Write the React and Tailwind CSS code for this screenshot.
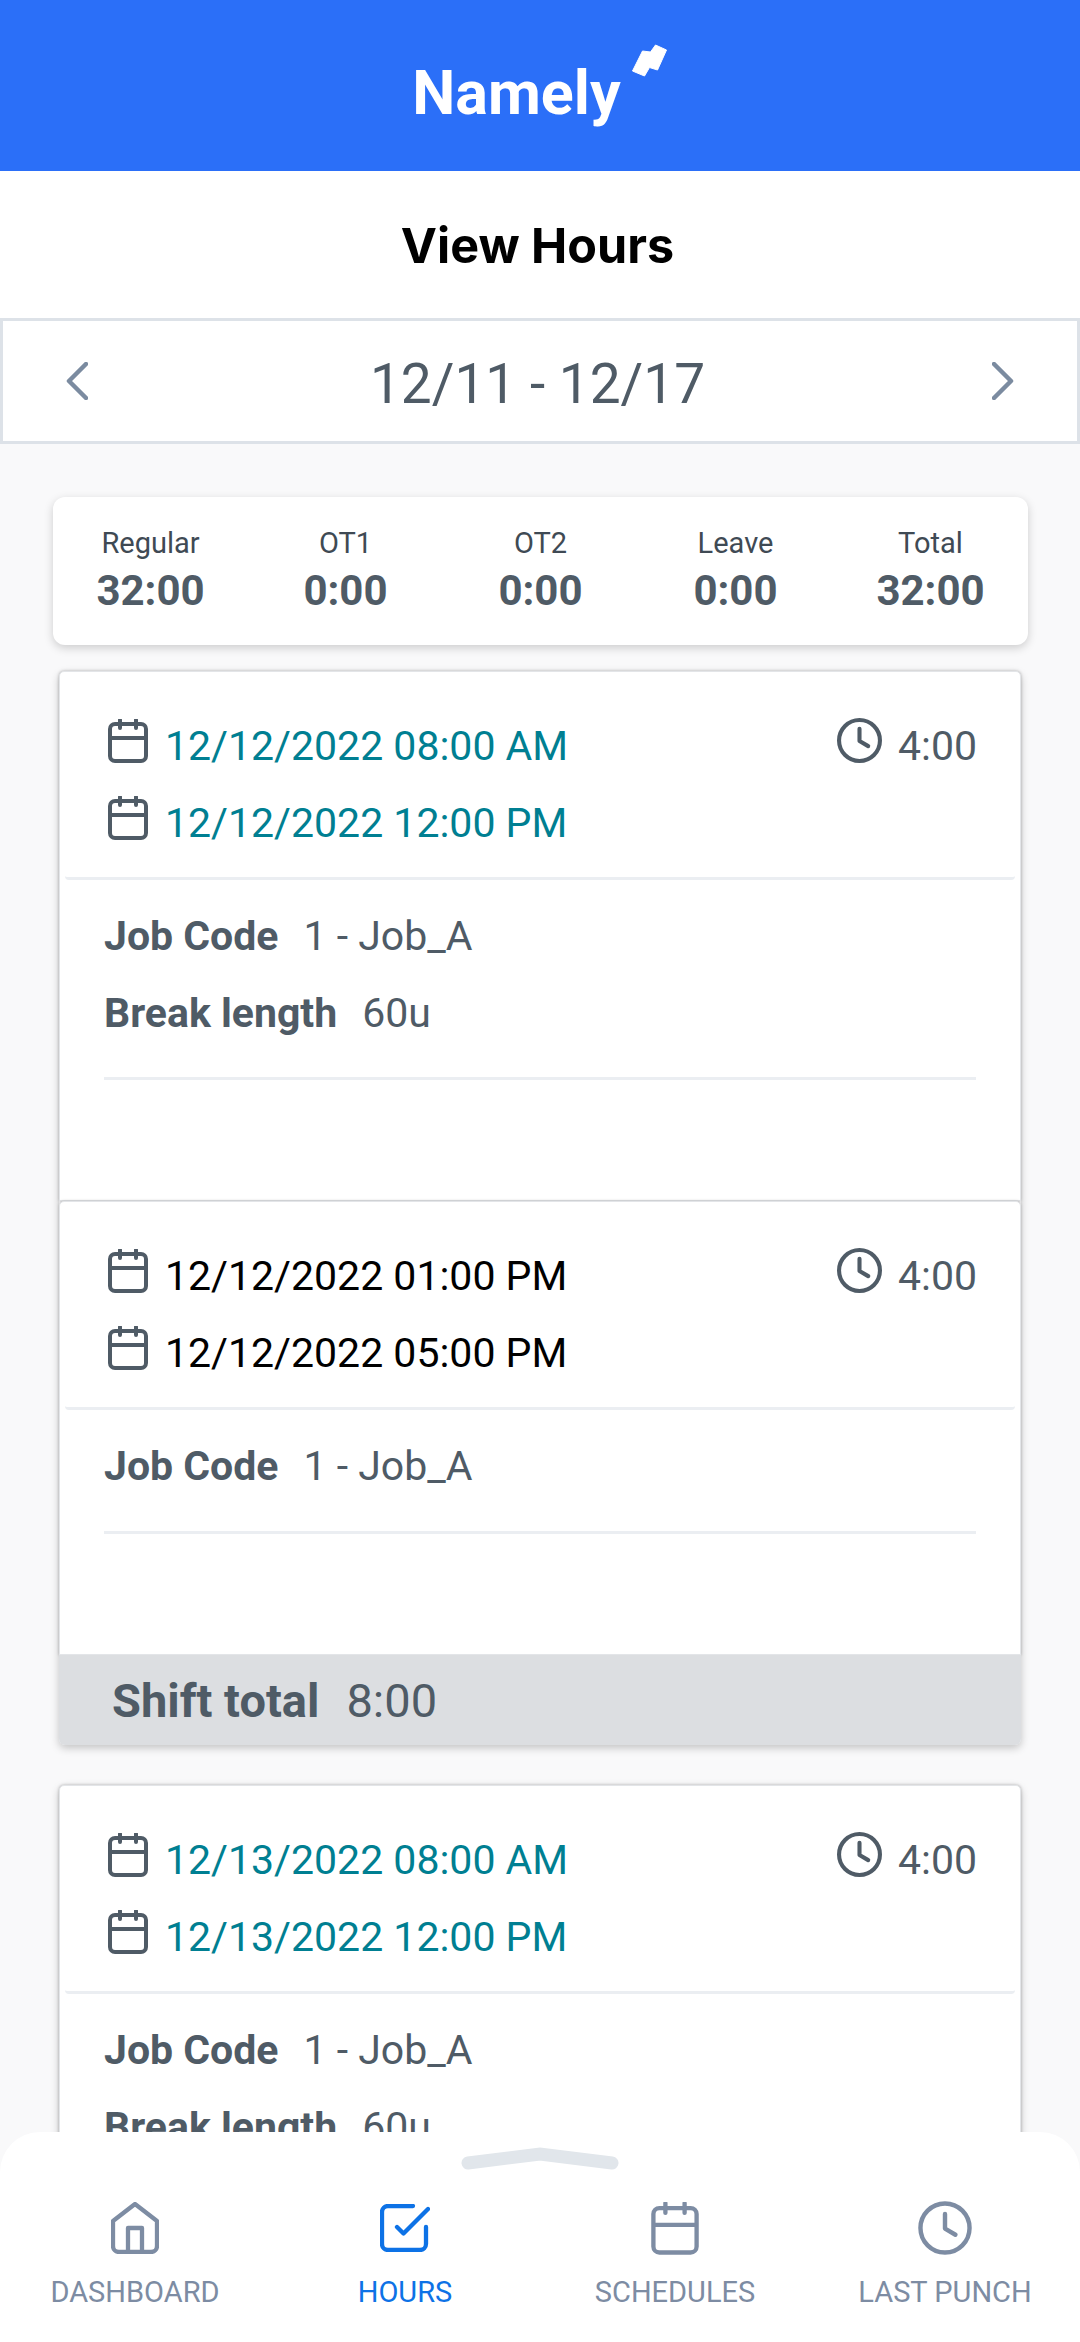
import React from "react";

const Calendar = ({ className, sw = 4 }) => (
  <svg viewBox="0 0 40 44" fill="none" stroke="currentColor" strokeWidth={sw} className={className}>
    <rect x="2" y="5" width="36" height="37" rx="5" />
    <path d="M2 19h36" />
    <path d="M12 1v8M28 1v8" strokeLinecap="round" />
  </svg>
);

const Clock = ({ className, sw = 4 }) => (
  <svg viewBox="0 0 44 44" fill="none" stroke="currentColor" strokeWidth={sw} strokeLinecap="round" strokeLinejoin="round" className={className}>
    <circle cx="22" cy="22" r="20" />
    <path d="M22 10.5v12l8.5 5" />
  </svg>
);

const Home = ({ className }) => (
  <svg viewBox="0 0 48 52" fill="none" stroke="currentColor" strokeWidth="4.3" strokeLinejoin="round" className={className}>
    <path d="M24 2 2 19v25a6 6 0 0 0 6 6h32a6 6 0 0 0 6-6V19Z" />
    <path d="M17 50V26h14v24" />
  </svg>
);

const CheckSquare = ({ className }) => (
  <svg viewBox="0 0 50 48" fill="none" stroke="currentColor" strokeWidth="4.3" strokeLinecap="round" strokeLinejoin="round" className={className}>
    <path d="M33 2H8a6 6 0 0 0-6 6v32a6 6 0 0 0 6 6h32a6 6 0 0 0 6-6V23" />
    <path d="m17 23 6.5 6.5L48 5" />
  </svg>
);

const Summary = ({ label, value }) => (
  <div className="flex flex-col items-center -mt-[1px]">
    <span className="text-[29px] leading-[36px] text-[#3f4a54]">{label}</span>
    <span className="text-[42px] leading-[50px] mt-[5px] font-bold text-[#4f5b66]">{value}</span>
  </div>
);

const DateRow = ({ text, color }) => (
  <div className="flex items-center h-[77px] gap-[17px]">
    <Calendar className="w-[40px] h-[44px] text-[#4f5b66] shrink-0 -mt-[11px]" />
    <span className={"text-[41px] " + color}>{text}</span>
  </div>
);

const Shift = ({ from, to, color, children }) => (
  <div className="bg-white border border-[#e3e5e8] rounded-t-[5px] shadow-[0_0_3px_rgba(0,0,0,0.25)] flex flex-col">
    <div className="pt-[36px] h-[208px] mx-[5px] border-b-[3px] border-[#ebeef2] rounded-b-[4px] pl-[43px] pr-[38px] flex justify-between">
      <div className="flex flex-col">
        <DateRow text={from} color={color} />
        <DateRow text={to} color={color} />
      </div>
      <div className="flex items-center h-[77px] gap-[16px]">
        <Clock className="w-[45px] h-[45px] text-[#4f5b66] -mt-[12px]" />
        <span className="text-[41px] text-[#4f5b66]">4:00</span>
      </div>
    </div>
    {children}
  </div>
);

const Info = ({ label, value }) => (
  <div className="flex items-center h-[77px] gap-[25px] text-[41px] text-[#4f5b66]">
    <span className="font-bold">{label}</span>
    <span>{value}</span>
  </div>
);

const NavItem = ({ icon, label, active }) => (
  <div className={"flex flex-col items-center " + (active ? "text-[#0d72e6]" : "text-[#7d8ca3]")}>
    <div className="h-[54px] flex items-center justify-center">{icon}</div>
    <span className="text-[29px] mt-[20px] leading-[34px]">{label}</span>
  </div>
);

export default function App() {
  return (
    <div className="relative h-[2342px] w-[1080px] overflow-hidden bg-[#f9f9fa] flex flex-col" style={{ fontFamily: "Roboto, sans-serif" }}>
      <header className="h-[171px] bg-[#2b6ff8] flex items-center justify-center shrink-0">
        <div className="flex items-start">
          <span className="text-white text-[61px] font-bold leading-[70px] mt-[14px]">Namely</span>
          <svg viewBox="0 0 36 33" className="ml-[10px] w-[37px] h-[33px]" fill="#fff" stroke="#fff" strokeLinejoin="round">
            <path d="M1 27 13 32 18 23.5 26 26 35 6 24 1 19 8 11 7Z" />
          </svg>
        </div>
      </header>

      <h1 className="h-[147px] bg-white flex items-center justify-center text-[48.5px] font-bold text-black shrink-0 pt-[3px] pr-[5px]" style={{ fontFamily: "Inter, sans-serif" }}>
        View Hours
      </h1>

      <div className="h-[126px] bg-white border-[3px] border-[#dde2e8] flex items-center justify-between px-[63px] shrink-0">
        <svg viewBox="0 0 22 38" className="w-[22px] h-[38px] text-[#7b8ba0]" fill="none" stroke="currentColor" strokeWidth="4.5" strokeLinecap="round" strokeLinejoin="round">
          <path d="M20 2 3 19l17 17" />
        </svg>
        <span className="text-[55px] text-[#4f5b66] pt-[7px] mr-[5px]">12/11 - 12/17</span>
        <svg viewBox="0 0 22 38" className="w-[22px] h-[38px] text-[#7b8ba0]" fill="none" stroke="currentColor" strokeWidth="4.5" strokeLinecap="round" strokeLinejoin="round">
          <path d="m2 2 17 17L2 36" />
        </svg>
      </div>

      <main className="flex-1 min-h-0 overflow-hidden pl-[53px] pr-[52px] pt-[53px]">
        <div className="h-[148px] bg-white rounded-[12px] shadow-[0_3px_10px_rgba(0,0,0,0.18)] grid grid-cols-5 items-center">
          <Summary label="Regular" value="32:00" />
          <Summary label="OT1" value="0:00" />
          <Summary label="OT2" value="0:00" />
          <Summary label="Leave" value="0:00" />
          <Summary label="Total" value="32:00" />
        </div>

        <div className="ml-[6px] mr-[7px] mt-[26px] rounded-[6px] shadow-[0_3px_8px_rgba(0,0,0,0.22)]">
          <Shift from="12/12/2022 08:00 AM" to="12/12/2022 12:00 PM" color="text-[#007f92]">
            <div className="h-[320px] px-[44px] pt-[18px]">
              <Info label="Job Code" value="1 - Job_A" />
              <Info label="Break length" value="60u" />
              <div className="mt-[25px] h-[3px] bg-[#ebeef2]" />
            </div>
          </Shift>
          <Shift from="12/12/2022 01:00 PM" to="12/12/2022 05:00 PM" color="text-black">
            <div className="h-[244px] px-[44px] pt-[18px]">
              <Info label="Job Code" value="1 - Job_A" />
              <div className="mt-[26px] h-[3px] bg-[#ebeef2]" />
            </div>
          </Shift>
          <div className="h-[90px] bg-[#dcdee1] rounded-b-[6px] flex items-center gap-[27px] pl-[53px] pt-[2px] text-[#4f5b66] text-[47px]">
            <span className="font-bold">Shift total</span>
            <span>8:00</span>
          </div>
        </div>

        <div className="ml-[6px] mr-[7px] mt-[40px] rounded-[6px] shadow-[0_3px_8px_rgba(0,0,0,0.22)]">
          <Shift from="12/13/2022 08:00 AM" to="12/13/2022 12:00 PM" color="text-[#007f92]">
            <div className="h-[320px] px-[44px] pt-[18px]">
              <Info label="Job Code" value="1 - Job_A" />
              <Info label="Break length" value="60u" />
            </div>
          </Shift>
        </div>
      </main>

      {/* bottom sheet sits on top of the scrolled list */}
      <nav className="absolute left-0 right-0 bottom-0 h-[210px] bg-white rounded-t-[40px]">
        <svg viewBox="0 0 160 26" className="absolute left-[460px] top-[14px] w-[160px] h-[26px]" fill="none" stroke="#e1e6eb" strokeWidth="13" strokeLinecap="round">
          <path d="M8 17 80 8l72 9" />
        </svg>
        <div className="grid grid-cols-4 pt-[69px]">
          <NavItem label="DASHBOARD" icon={<Home className="w-[48px] h-[52px]" />} />
          <NavItem label="HOURS" active icon={<CheckSquare className="w-[50px] h-[48px]" />} />
          <NavItem label="SCHEDULES" icon={<Calendar sw={3.6} className="w-[48px] h-[53px]" />} />
          <NavItem label="LAST PUNCH" icon={<Clock sw={3.6} className="w-[54px] h-[54px]" />} />
        </div>
      </nav>
    </div>
  );
}
